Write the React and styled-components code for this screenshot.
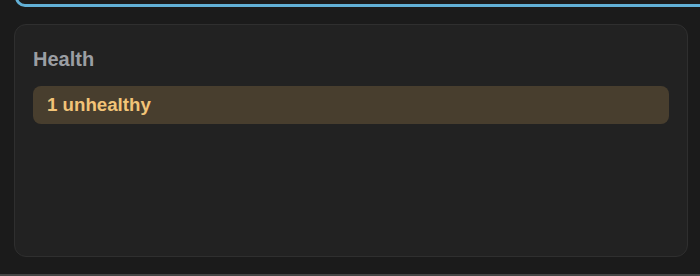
import React from 'react'
import styled, { createGlobalStyle } from 'styled-components'

const GlobalStyle = createGlobalStyle`
  html, body {
    margin: 0;
    padding: 0;
    background: #1b1b1b;
    font-family: "Liberation Sans", Arial, sans-serif;
  }
`

const Page = styled.div`
  height: 276px;
  display: flex;
  flex-direction: column;
  overflow: hidden;
  box-sizing: border-box;
  border-bottom: 2px solid #454545;
`

const TopClip = styled.div`
  height: 7px;
  overflow: hidden;
  padding-left: 15px;
`

const SearchBox = styled.div`
  box-sizing: border-box;
  height: 24px;
  margin-top: -17px;
  margin-right: -30px;
  border: 3px solid #62b0d6;
  border-radius: 10px;
  background: #1c1c1c;
`

const Card = styled.section`
  margin: 17px 12px 0 14px;
  height: 233px;
  box-sizing: border-box;
  padding: 23px 18px;
  background: #222222;
  border: 1px solid #2f2f2f;
  border-radius: 12px;
  display: flex;
  flex-direction: column;
  gap: 15px;
`

const Title = styled.h2`
  margin: 0;
  font-size: 20px;
  line-height: 23px;
  font-weight: 700;
  color: #9b9ea3;
`

const Status = styled.div`
  height: 38px;
  box-sizing: border-box;
  display: flex;
  align-items: center;
  padding: 0 14px;
  border-radius: 8px;
  background: ${p => (p.tone === 'warn' ? '#483e2e' : '#2b3a2e')};
  color: ${p => (p.tone === 'warn' ? '#f2c478' : '#8fd19e')};
  font-size: 18.7px;
  font-weight: 700;
`

export default function App() {
  return (
    <>
      <GlobalStyle />
      <Page>
        <TopClip>
          <SearchBox />
        </TopClip>
        <Card>
          <Title>Health</Title>
          <Status tone="warn">1 unhealthy</Status>
        </Card>
      </Page>
    </>
  )
}
